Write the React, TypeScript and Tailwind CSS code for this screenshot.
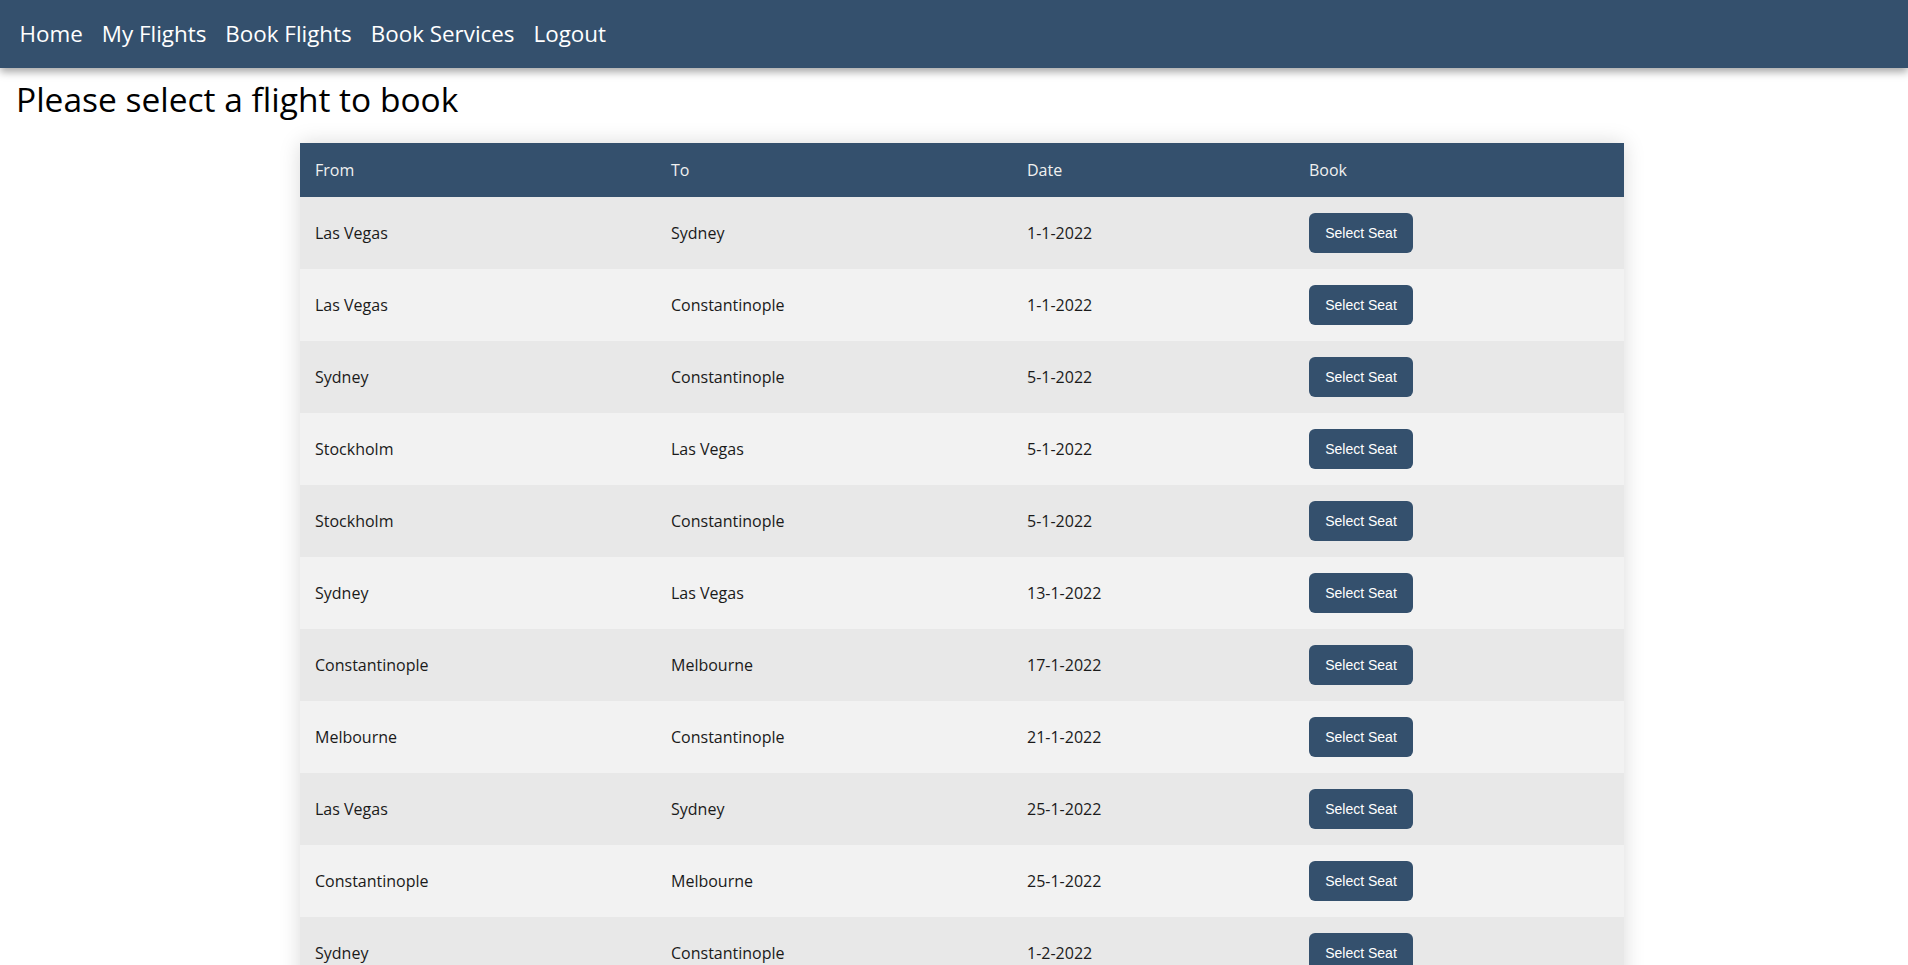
import React from "react";

const flights = [
  { from: "Las Vegas", to: "Sydney", date: "1-1-2022" },
  { from: "Las Vegas", to: "Constantinople", date: "1-1-2022" },
  { from: "Sydney", to: "Constantinople", date: "5-1-2022" },
  { from: "Stockholm", to: "Las Vegas", date: "5-1-2022" },
  { from: "Stockholm", to: "Constantinople", date: "5-1-2022" },
  { from: "Sydney", to: "Las Vegas", date: "13-1-2022" },
  { from: "Constantinople", to: "Melbourne", date: "17-1-2022" },
  { from: "Melbourne", to: "Constantinople", date: "21-1-2022" },
  { from: "Las Vegas", to: "Sydney", date: "25-1-2022" },
  { from: "Constantinople", to: "Melbourne", date: "25-1-2022" },
  { from: "Sydney", to: "Constantinople", date: "1-2-2022" },
  { from: "Stockholm", to: "Melbourne", date: "4-2-2022" },
  { from: "Melbourne", to: "Las Vegas", date: "9-2-2022" },
];

const links = ["Home", "My Flights", "Book Flights", "Book Services", "Logout"];

export default function App() {
  return (
    <div className="min-h-screen bg-white font-['Open_Sans',sans-serif] text-[#1a1a1a]">
      {/* Nav */}
      <nav className="flex h-[68px] items-center bg-[#34506d] px-[10px] shadow-[0_4px_8px_rgba(0,0,0,0.35)]">
        {links.map((l) => (
          <a key={l} href="#" className="px-[9.5px] text-[22.4px] text-white">
            {l}
          </a>
        ))}
      </nav>

      <h1 className="mt-[8px] px-[16px] text-[33.5px] leading-[46px] text-black">
        Please select a flight to book
      </h1>

      <div className="mt-[21px] ml-[300px] w-[1324px] shadow-[0_0_20px_rgba(0,0,0,0.15)]">
        <table className="w-full table-fixed border-collapse text-left text-[16px]">
          <thead>
            <tr className="bg-[#34506d] text-[#f0f0f0]">
              <th className="w-[356px] px-[15px] py-[16px] font-normal leading-[22px]">From</th>
              <th className="w-[356px] px-[15px] py-[16px] font-normal leading-[22px]">To</th>
              <th className="w-[282px] px-[15px] py-[16px] font-normal leading-[22px]">Date</th>
              <th className="px-[15px] py-[16px] font-normal leading-[22px]">Book</th>
            </tr>
          </thead>
          <tbody>
            {flights.map((f, i) => (
              <tr key={i} className={i % 2 === 0 ? "bg-[#e8e8e8]" : "bg-[#f2f2f2]"}>
                <td className="h-[72px] px-[15px] py-0">{f.from}</td>
                <td className="px-[15px]">{f.to}</td>
                <td className="px-[15px]">{f.date}</td>
                <td className="px-[15px]">
                  <button className="h-[40px] w-[104px] rounded-[6px] bg-[#34506d] font-['Liberation_Sans',Arial,sans-serif] text-[14px] text-white">
                    Select Seat
                  </button>
                </td>
              </tr>
            ))}
          </tbody>
        </table>
      </div>
    </div>
  );
}
